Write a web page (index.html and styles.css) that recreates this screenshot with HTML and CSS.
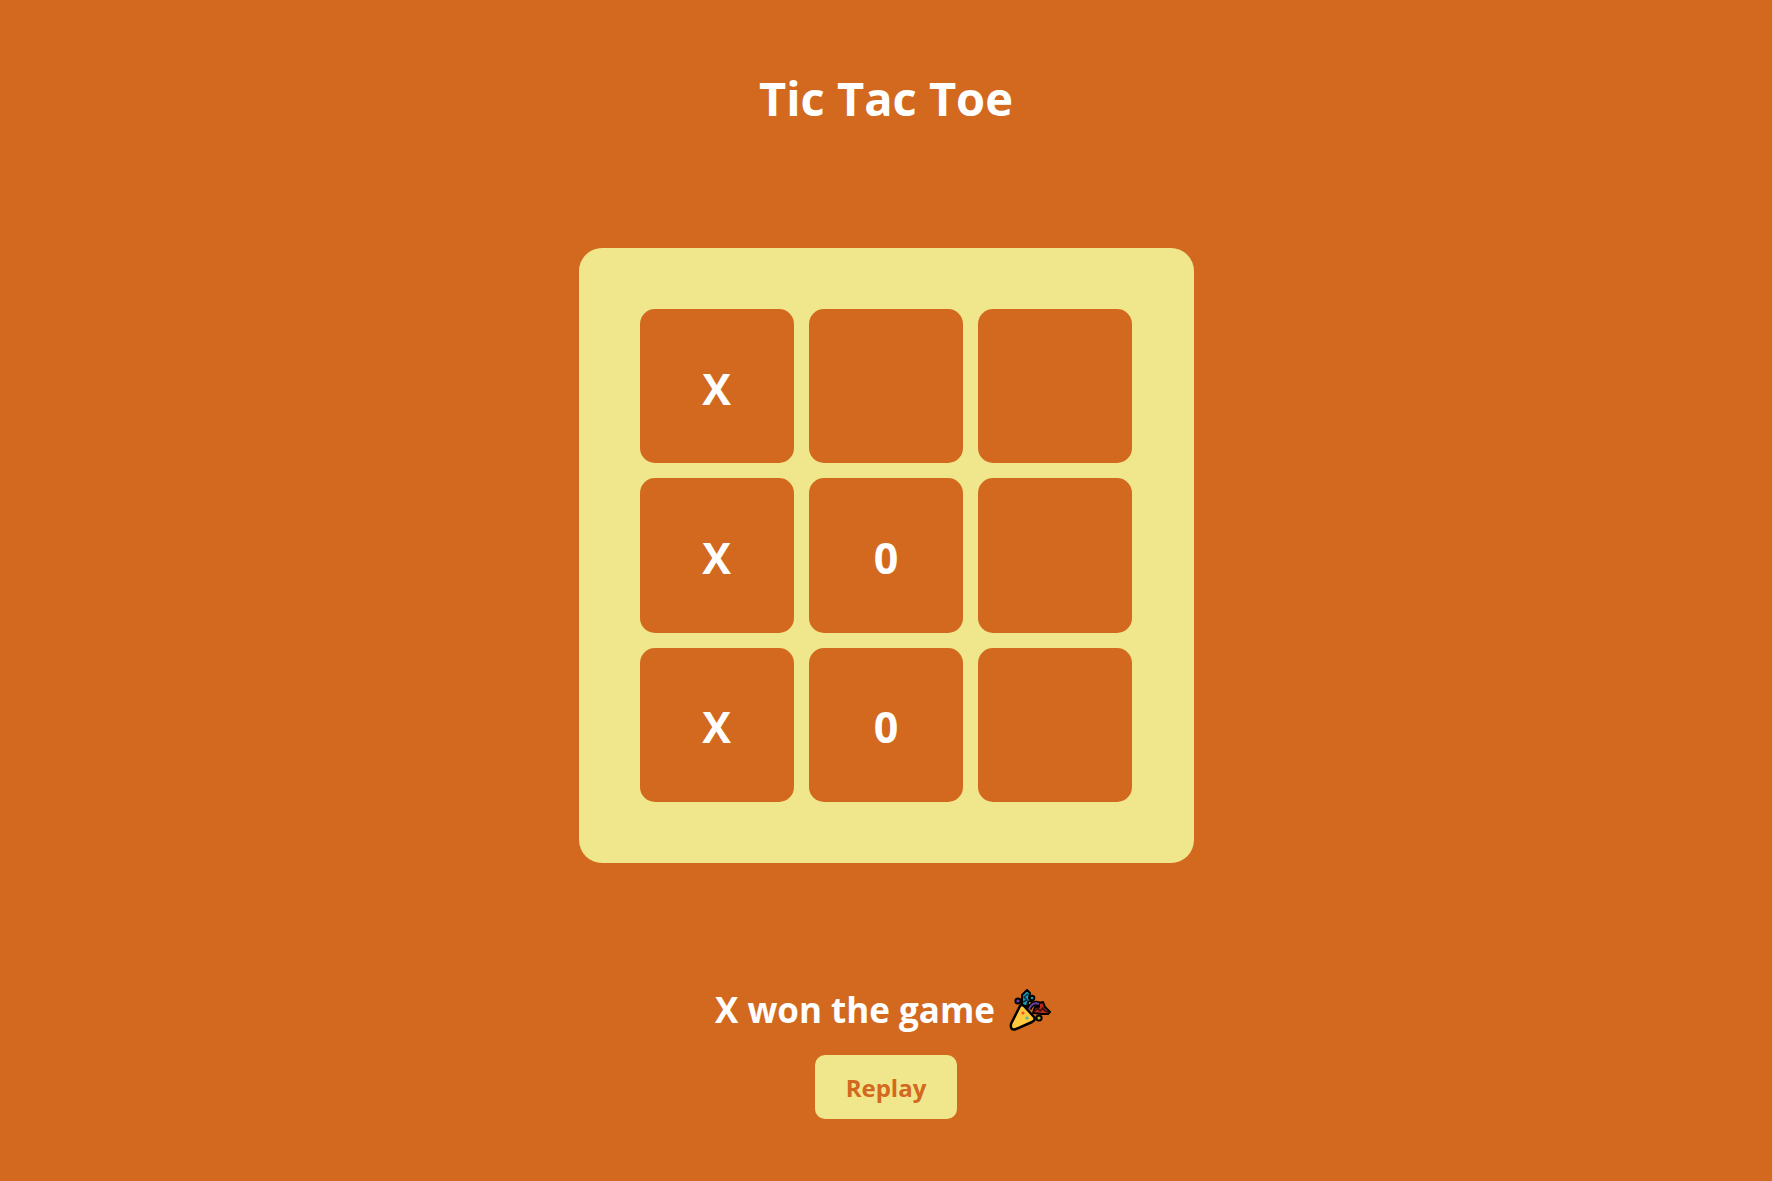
FILE: index.html
```html
<!DOCTYPE html>
<html lang="en">
<head>
<meta charset="utf-8">
<meta name="viewport" content="width=device-width, initial-scale=1">
<title>Tic Tac Toe</title>
<link rel="stylesheet" href="styles.css">
</head>
<body>
<main class="game">
  <h1 class="title">Tic Tac Toe</h1>
  <div class="board">
    <button class="tile" type="button">X</button>
    <button class="tile" type="button" aria-label="Empty"></button>
    <button class="tile" type="button" aria-label="Empty"></button>
    <button class="tile" type="button">X</button>
    <button class="tile" type="button">0</button>
    <button class="tile" type="button" aria-label="Empty"></button>
    <button class="tile" type="button">X</button>
    <button class="tile" type="button">0</button>
    <button class="tile" type="button" aria-label="Empty"></button>
  </div>
  <div class="result">
    <p class="message">
      <span>X won the game</span>
      <svg class="party" viewBox="0 0 42 42" aria-hidden="true">
        <g stroke="#000" stroke-width="2" stroke-linejoin="round">
          <circle cx="9" cy="12" r="2.600" fill="#6b45b8"/>
          <path d="M13 17 13 6 18 1 21 4 20 9 22 12 19 17Z" fill="#199bb5"/>
          <circle cx="23" cy="9" r="2.300" fill="#199bb5"/>
          <circle cx="21" cy="14.500" r="2.200" fill="#d8c22c"/>
          <path d="M20 20C22 15 26 13 30 15" fill="none" stroke-width="5"/>
          <path d="M24 24 26 18 30 18 30 14 34 13 36 18 41 23 39 25 33 25Z" fill="#b92a18"/>
          <circle cx="30" cy="29" r="2.600" fill="#b8b22b"/>
        </g>
        <path d="M20 20C22 15 26 13 30 15" fill="none" stroke="#68429a" stroke-width="2"/>
        <path d="M14 13 18 11 15 8 19 5M18 16 18 14" fill="none" stroke="#07303c" stroke-width="1.500"/>
        <path d="M26 22 29 19 31 22 34 19 36 22 39 23" fill="none" stroke="#35100b" stroke-width="1.500"/>
        <path d="M11 17Q13 15 15 17L25 28Q27 31 23 33L7 40Q1 42 2 35Z" fill="#ffc83d" stroke="#000" stroke-width="2.500" stroke-linejoin="round"/>
        <circle cx="14" cy="24" r="1.600" fill="#f4512f"/>
        <circle cx="18" cy="29" r="1.600" fill="#45bba0"/>
      </svg>
    </p>
    <button class="replay" type="button">Replay</button>
  </div>
</main>
</body>
</html>
```
FILE: styles.css
```css
* {
  box-sizing: border-box;
}

body {
  margin: 0;
  min-height: 100vh;
  background: chocolate;
  color: #fff;
  font-family: "Segoe UI", "Open Sans", "Noto Sans", sans-serif;
}

.game {
  display: flex;
  flex-direction: column;
  align-items: center;
  padding: 64px 16px 60px;
}

.title {
  margin: 0 0 116px;
  font-size: 47px;
  line-height: 68px;
  font-weight: 700;
}

.board {
  display: grid;
  grid-template-columns: repeat(3, 1fr);
  gap: 15px;
  width: 100%;
  max-width: 615px;
  padding: 61px;
  border-radius: 23px;
  background: khaki;
}

.tile {
  display: flex;
  align-items: center;
  justify-content: center;
  aspect-ratio: 1;
  padding: 4px 0 0;
  border: 0;
  border-radius: 15px;
  background: chocolate;
  color: #fff;
  font: inherit;
  font-size: 43px;
  font-weight: 700;
  cursor: pointer;
}

.result {
  display: flex;
  flex-direction: column;
  align-items: center;
  gap: 20px;
  margin-top: 122px;
}

.message {
  display: flex;
  align-items: center;
  gap: 14px;
  margin: 0;
  padding-right: 6px;
  font-size: 35px;
  line-height: 50px;
  font-weight: 700;
}

.party {
  width: 42px;
  height: 42px;
}

.replay {
  padding: 16px 31px 14px;
  border: 0;
  border-radius: 10px;
  background: khaki;
  color: chocolate;
  font: inherit;
  font-size: 24px;
  line-height: 34px;
  font-weight: 700;
  cursor: pointer;
}
```
